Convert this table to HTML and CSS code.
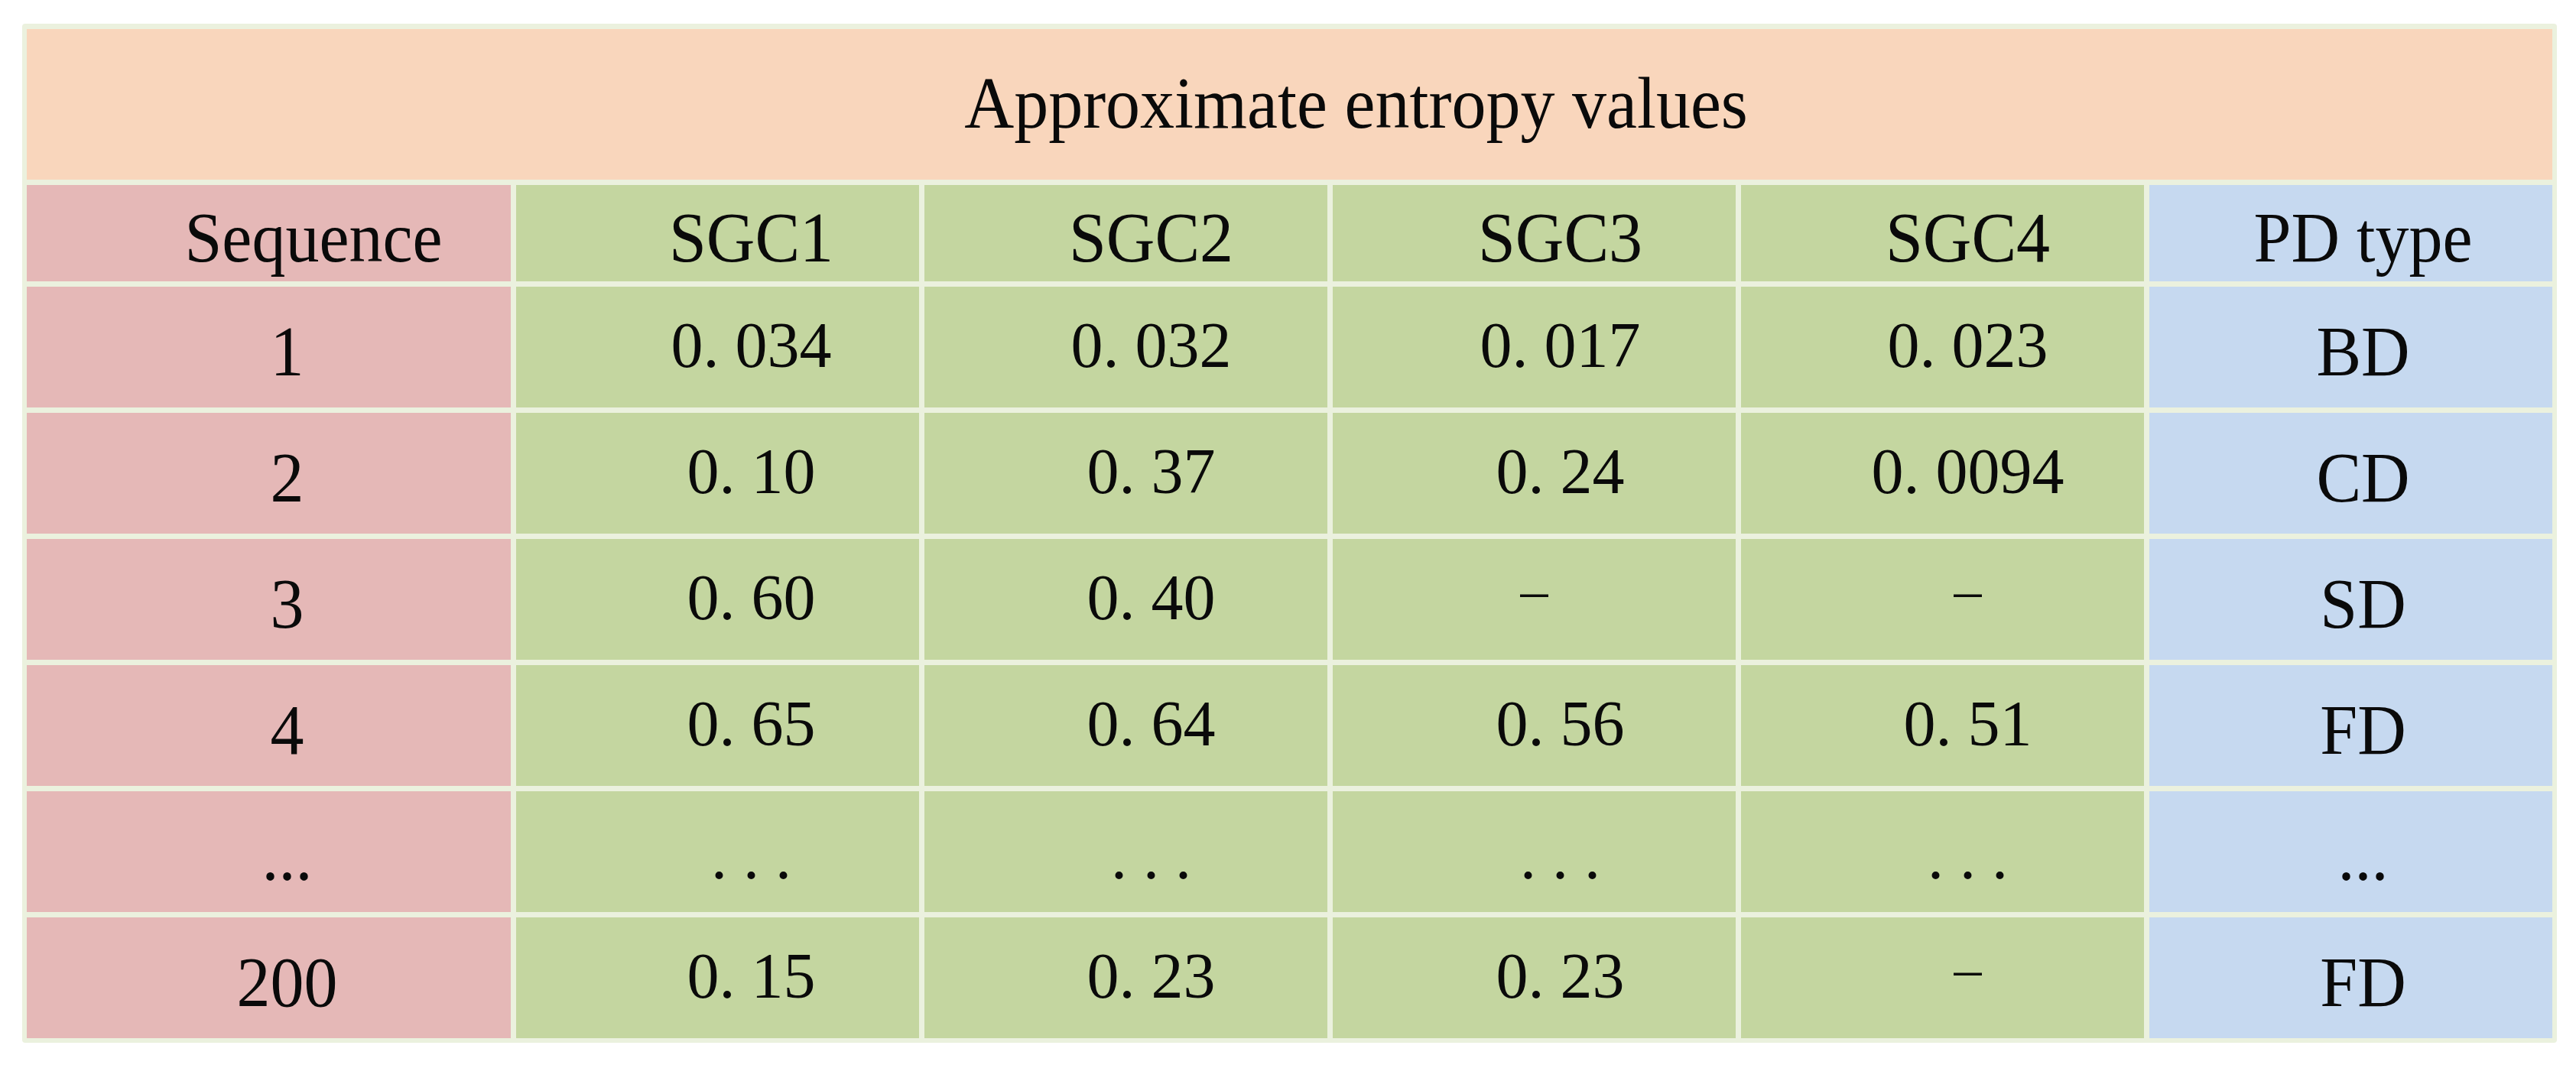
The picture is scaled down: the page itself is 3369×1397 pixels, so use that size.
FILE: index.html
```html
<!DOCTYPE html>
<html lang="en">
<head>
<meta charset="utf-8">
<title>Approximate entropy values</title>
<link rel="stylesheet" href="styles.css">
</head>
<body>
<div class="frame">
  <div class="title"><span class="lbl">Approximate entropy values</span></div>
  <div class="grid">
    <div class="cell seq head-seq txt"><span class="lbl">Sequence</span></div>
    <div class="cell sgc c1 txt"><span class="lbl">SGC1</span></div>
    <div class="cell sgc c2 txt"><span class="lbl">SGC2</span></div>
    <div class="cell sgc c3 txt"><span class="lbl">SGC3</span></div>
    <div class="cell sgc c4 txt"><span class="lbl">SGC4</span></div>
    <div class="cell pd txt"><span class="lbl">PD type</span></div>

    <div class="cell seq txt"><span class="lbl">1</span></div>
    <div class="cell sgc c1 num">0. 034</div>
    <div class="cell sgc c2 num">0. 032</div>
    <div class="cell sgc c3 num">0. 017</div>
    <div class="cell sgc c4 num">0. 023</div>
    <div class="cell pd txt"><span class="lbl">BD</span></div>

    <div class="cell seq txt"><span class="lbl">2</span></div>
    <div class="cell sgc c1 num">0. 10</div>
    <div class="cell sgc c2 num">0. 37</div>
    <div class="cell sgc c3 num">0. 24</div>
    <div class="cell sgc c4 num">0. 0094</div>
    <div class="cell pd txt"><span class="lbl">CD</span></div>

    <div class="cell seq txt"><span class="lbl">3</span></div>
    <div class="cell sgc c1 num">0. 60</div>
    <div class="cell sgc c2 num">0. 40</div>
    <div class="cell sgc c3 dash centered">–</div>
    <div class="cell sgc c4 dash">–</div>
    <div class="cell pd txt"><span class="lbl">SD</span></div>

    <div class="cell seq txt"><span class="lbl">4</span></div>
    <div class="cell sgc c1 num">0. 65</div>
    <div class="cell sgc c2 num">0. 64</div>
    <div class="cell sgc c3 num">0. 56</div>
    <div class="cell sgc c4 num">0. 51</div>
    <div class="cell pd txt"><span class="lbl">FD</span></div>

    <div class="cell seq txt"><span class="lbl">...</span></div>
    <div class="cell sgc c1 dots">. . .</div>
    <div class="cell sgc c2 dots">. . .</div>
    <div class="cell sgc c3 dots">. . .</div>
    <div class="cell sgc c4 dots">. . .</div>
    <div class="cell pd txt"><span class="lbl">...</span></div>

    <div class="cell seq txt"><span class="lbl">200</span></div>
    <div class="cell sgc c1 num">0. 15</div>
    <div class="cell sgc c2 num">0. 23</div>
    <div class="cell sgc c3 num">0. 23</div>
    <div class="cell sgc c4 dash">–</div>
    <div class="cell pd txt"><span class="lbl">FD</span></div>
  </div>
</div>
</body>
</html>
```

FILE: styles.css
```css
html, body {
  margin: 0;
  padding: 0;
  background: #ffffff;
}

body {
  font-family: "Liberation Serif", "Times New Roman", serif;
  color: #0a0a0a;
}

.frame {
  margin: 31px 0 0 29px;
  width: 3315px;
  box-sizing: border-box;
  padding: 7px 6px 6px 6px;
  background: #ebf1de;
  border-radius: 4px;
  display: flex;
  flex-direction: column;
  gap: 7px;
}

.title {
  height: 197px;
  background: #f9d6bc;
  display: flex;
  align-items: center;
  justify-content: center;
  padding: 0 0 4px 174px;
  box-sizing: border-box;
  font-size: 90px;
  line-height: 1.107;
  white-space: nowrap;
}

.lbl {
  display: inline-block;
  transform: scaleY(1.05);
}

.grid {
  display: grid;
  grid-template-columns: 633px repeat(5, 527px);
  grid-template-rows: 126px repeat(6, 158px);
  gap: 7px;
}

.cell {
  display: flex;
  align-items: center;
  justify-content: center;
  box-sizing: border-box;
  white-space: nowrap;
  line-height: 1.107;
}

.seq { background: #e5b8b7; padding-left: 48px; }
.sgc { background: #c4d6a0; }
.pd  { background: #c6d9f0; padding-left: 32px; }

.c1 { padding-left: 88px; }
.c2 { padding-left: 66px; }
.c3 { padding-left: 68px; }
.c4 { padding-left: 66px; }

.head-seq { padding-left: 117px; }

.txt {
  font-size: 88px;
  padding-top: 13px;
}

.num {
  font-size: 84px;
  padding-bottom: 5px;
}

.dots {
  font-size: 84px;
  padding-top: 12px;
}

.dash {
  font-size: 72px;
  padding-bottom: 22px;
}

.dash.centered {
  padding-left: 0;
}
```
